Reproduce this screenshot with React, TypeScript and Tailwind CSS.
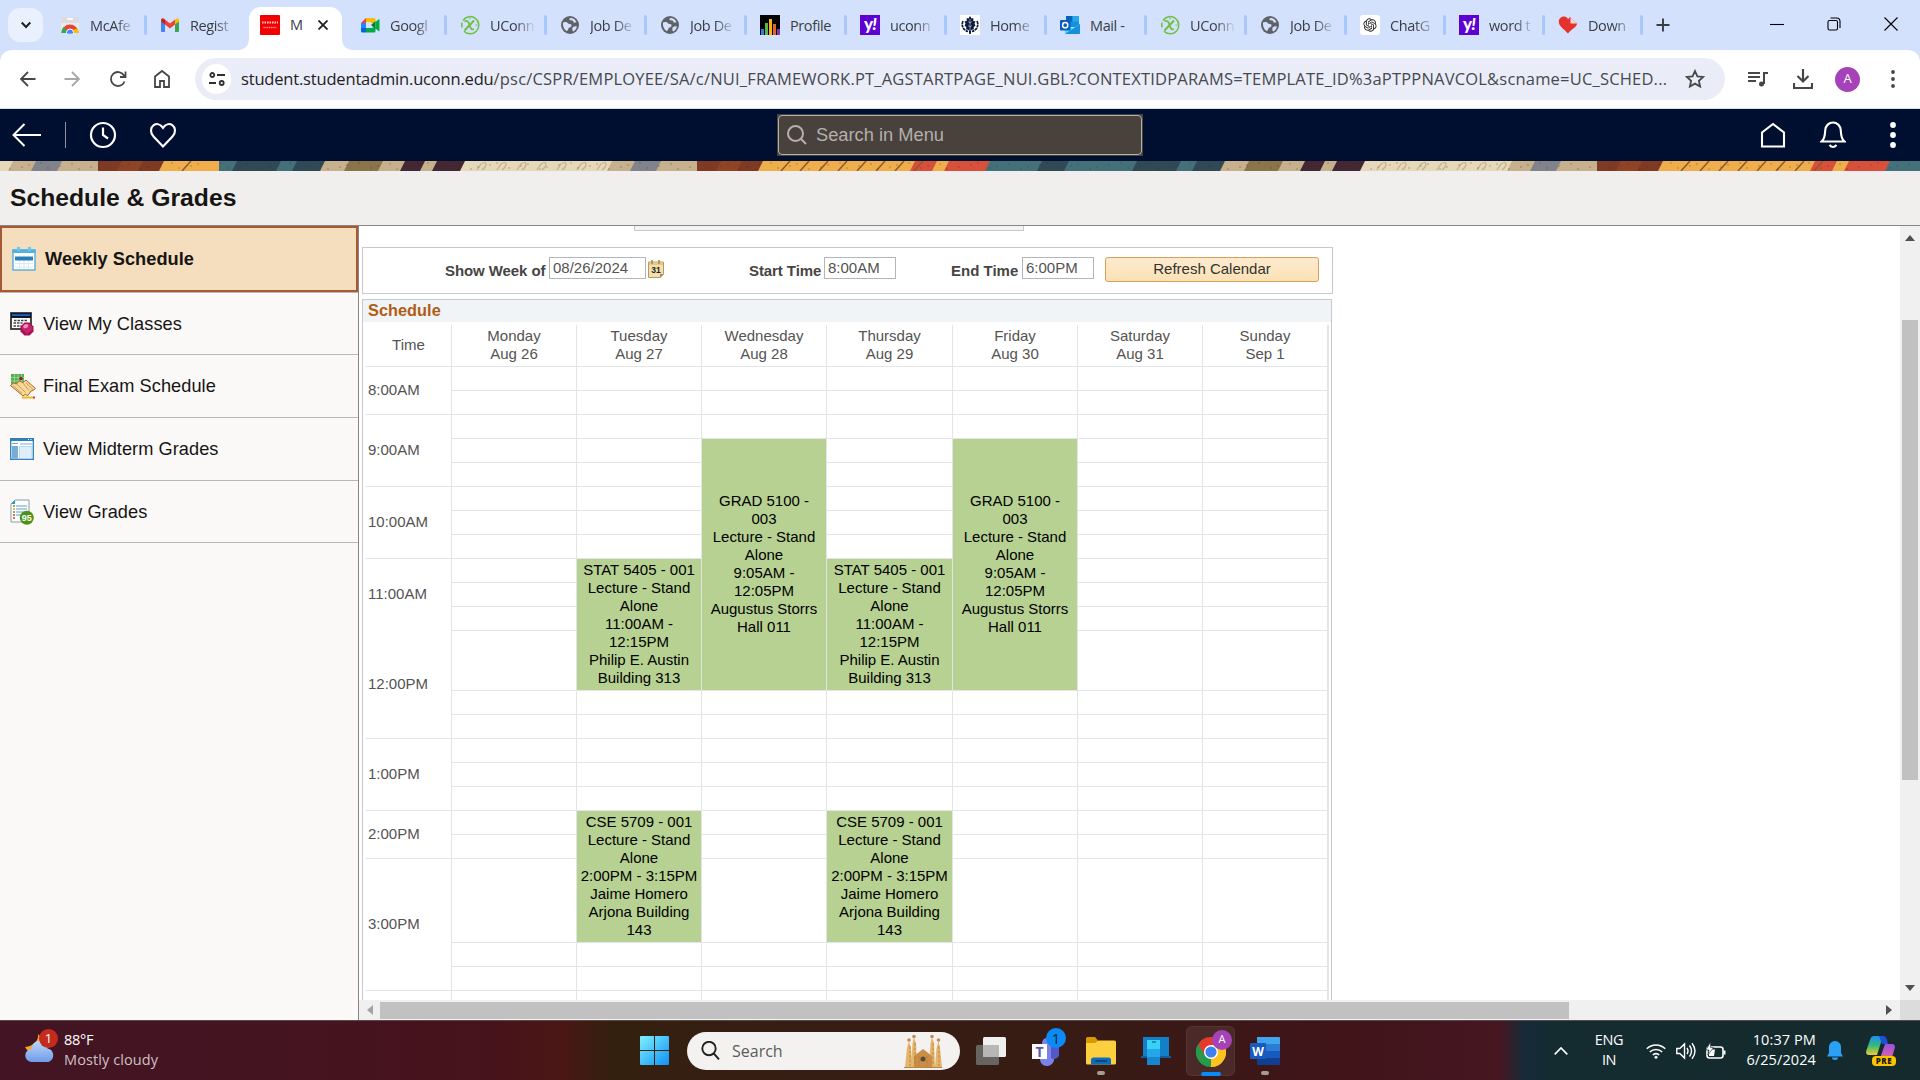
import React from 'react';
import { RiOpenaiFill } from 'react-icons/ri';

type Kids = { children?: React.ReactNode };

/* ---------- tab icons ---------- */

const StoreIcon = () => (
  <svg viewBox="0 0 20 20" className="h-5 w-5">
    <path d="M1 2h18v16H1z" fill="#e8eaed" />
    <path d="M1 2h18v6H1z" fill="#dadce0" />
    <path d="M7 4h6" stroke="#fff" strokeWidth="1.6" />
    <path d="M1.5 18a8.5 8.5 0 0 1 17 0h-5a3.5 3.5 0 0 0-7 0z" fill="#ea4335" />
    <path d="M1.5 18c0-3 1-5 2.6-6.300L7.500 17v1z" fill="#34a853" />
    <path d="M12 15l6-1.500c.4 1.200.5 3 .5 4.500h-6z" fill="#fbbc04" />
    <circle cx="10" cy="17.500" r="3.500" fill="#4285f4" stroke="#fff" />
    <path d="M0 18.600h20v1.400H0z" fill="#d3e1fd" />
  </svg>
);

const GmailIcon = () => (
  <svg viewBox="0 0 20 20" className="h-5 w-5">
    <path d="M1 5v11q0 1 1 1h3V8z" fill="#4285f4" />
    <path d="M19 5v11q0 1-1 1h-3V8z" fill="#34a853" />
    <path d="M5 4.500l5 4 5-4v5l-5 4-5-4z" fill="#ea4335" />
    <path d="M1 5.500Q1 3 3 3.200L5 4.500v5l-4-3z" fill="#c5221f" />
    <path d="M19 5.500Q19 3 17 3.200L15 4.500v5l4-3z" fill="#fbbc04" />
  </svg>
);

const OracleIcon = () => (
  <svg viewBox="0 0 20 20" className="h-5 w-5">
    <rect width="20" height="20" rx="1" fill="#f00000" />
    <path d="M2 7.500h16" stroke="#ffc4c4" strokeWidth="1.800" strokeDasharray="1.600 .9" />
    <path d="M3.500 12.500h13" stroke="#ff8f8f" strokeWidth="1.400" strokeDasharray="1.200 .6" />
  </svg>
);

const MeetIcon = () => (
  <svg viewBox="0 0 20 20" className="h-5 w-5">
    <path d="M1 8l5-5v5z" fill="#ea4335" />
    <path d="M6 3h8q1.500 0 1.500 1.500V8H11V7H6z" fill="#fbbc04" />
    <path d="M1 8h5v5H1z" fill="#2684fc" />
    <path d="M1 13h5v4.500H2.500Q1 17.500 1 16z" fill="#0066da" />
    <path d="M6 13h5l4.500-1v4q0 1.500-1.500 1.500H6z" fill="#00ac47" />
    <path d="M11 10l4.500-4v8z" fill="#00832d" />
    <path d="M15.500 7l3-2.500q1-.5 1 .5v10.500q0 1-1 .5l-3-2.500z" fill="#00ac47" />
  </svg>
);

const XIcon = () => (
  <svg viewBox="0 0 20 20" className="h-5 w-5" fill="none" stroke="#6fc043">
    <path d="M3 5.500A8.600 8.600 0 1 1 4 16.200M2.200 12.500A8.600 8.600 0 0 1 2 7.500" strokeWidth="1.500" />
    <path d="M4.500 6.500c2.500-1.500 4 0 4.800 3s2 5.800 4.700 4.500" strokeWidth="1.800" />
    <path d="M14 5.500L4.500 15.500" strokeWidth="2" />
    <path d="M10 2.500v2M15.500 10h2" strokeWidth="1" />
  </svg>
);

const GlobeIcon = () => (
  <svg viewBox="0 0 20 20" className="h-5 w-5">
    <circle cx="10" cy="10" r="9" fill="#5f6368" />
    <path d="M3 7.500c2-1 4-.5 5 .8s3.500 0 3.500 2.200-2.500 1.500-3 3-1 2.500-1.800 2.600C4.500 14.800 2.600 12 3 7.500z" fill="#d3e1fd" />
    <path d="M10.500 2.900c-1.500.6-1.500 1.800-.2 2.300s2.700-.2 3 1.200 1 1.500 2 1.200l1.200-.6C15.500 4.500 13 2.900 10.500 2.900zM13 12c1.500-.8 3-.8 3.900-.3-.6 2.500-2.200 4.200-3.900 4.800-1-1.400-1-3.500 0-4.500z" fill="#d3e1fd" />
  </svg>
);

const BarsIcon = () => (
  <svg viewBox="0 0 20 20" className="h-5 w-5">
    <rect width="20" height="20" fill="#000" />
    <rect x="1" y="14" width="3" height="6" fill="#2f7fe6" />
    <rect x="5" y="8" width="3" height="12" fill="#57b947" />
    <rect x="9" y="4" width="3" height="16" fill="#f6b21b" />
    <rect x="13" y="9" width="3" height="11" fill="#e8622c" />
    <rect x="17" y="14" width="3" height="6" fill="#7d3aa8" />
  </svg>
);

const YahooIcon = () => (
  <span className="flex h-5 w-5 items-center justify-center bg-[#5f01d1] pb-[3px] font-['Lato',sans-serif] text-[17px] leading-none font-black tracking-tighter text-white">
    y<i>!</i>
  </span>
);

const OakIcon = () => (
  <svg viewBox="0 0 20 20" className="h-5 w-5">
    <rect width="20" height="20" fill="#fff" />
    <path d="M10 1l1.500 2.500L13.300 3v3l2.200.2-1 2.600 1 1.700-1.800 1.700.2 2-2.700.8-.4 4h-1.600l-.4-4-2.700-.8.200-2-1.800-1.700 1-1.700-1-2.600L6.700 6V3l1.800.5z" fill="#0c1c3f" />
    <path d="M3 6C1 10.500 3 15 8 16.500M17 6c2 4.500 0 9-5 10.500" fill="none" stroke="#0c1c3f" strokeWidth="1.700" strokeDasharray="3 .6" />
    <path d="M10 4v12M10 8L8 6.500M10 8l2-1.500M10 12l-2-1.500M10 12l2-1.500" stroke="#fff" strokeWidth=".5" />
  </svg>
);

const OutlookIcon = () => (
  <svg viewBox="0 0 20 20" className="h-5 w-5">
    <path d="M6 1h13v11H6z" fill="#1490df" />
    <path d="M6 1h6.500v5.500H6z" fill="#0364b8" />
    <path d="M12.500 1H19v5.500h-6.500z" fill="#28a8ea" />
    <path d="M5 9l7.500 4.500L20 9v9q0 1-1 1H6q-1 0-1-1z" fill="#50d9ff" />
    <path d="M5 19L20 9v9q0 1-1 1z" fill="#1490df" />
    <rect y="5" width="10.500" height="10.500" rx="1" fill="#0a5fbd" />
    <circle cx="5.200" cy="10.200" r="2.600" fill="none" stroke="#fff" strokeWidth="1.500" />
  </svg>
);

const GptMark = () => (
  <span className="flex h-5 w-5 items-center justify-center rounded-[3px] bg-white text-[16px] text-[#222]">
    <RiOpenaiFill />
  </span>
);

const HeartIcon = () => (
  <svg viewBox="0 0 20 20" className="h-5 w-5">
    <path d="M10 18.500C6 14 .5 11 .8 6.500 1 3 3.500 1.500 6 1.500q3 0 4 2.800L12 2l7 6.500c0 3.500-5 5-9 10z" fill="#e5322d" />
    <path d="M12.500 2.500L19 8.500h-6.500z" fill="#f9d7d6" />
  </svg>
);

const TABS: { label: string; icon: React.ReactNode; active?: boolean; line?: boolean; w?: string }[] = [
  { label: 'McAfe', icon: <StoreIcon />, line: true },
  { label: 'Regist', icon: <GmailIcon /> },
  { label: 'M', icon: <OracleIcon />, active: true },
  { label: 'Googl', icon: <MeetIcon />, line: true },
  { label: 'UConn', icon: <XIcon />, line: true },
  { label: 'Job De', icon: <GlobeIcon />, line: true },
  { label: 'Job De', icon: <GlobeIcon />, line: true },
  { label: 'Profile', icon: <BarsIcon />, line: true },
  { label: 'uconn', icon: <YahooIcon />, line: true },
  { label: 'Home', icon: <OakIcon />, line: true },
  { label: 'Mail -', icon: <OutlookIcon />, line: true },
  { label: 'UConn', icon: <XIcon />, line: true },
  { label: 'Job De', icon: <GlobeIcon />, line: true },
  { label: 'ChatG', icon: <GptMark />, line: true, w: 'w-[99px]' },
  { label: 'word t', icon: <YahooIcon />, line: true, w: 'w-[99px]' },
  { label: 'Down', icon: <HeartIcon />, line: true, w: 'w-[98px]' },
];

function TabStrip() {
  return (
    <div className="flex h-[50px] w-full bg-[#d3e1fd]">
      <div className="mt-2 ml-2 flex h-[34px] w-[35px] items-center justify-center rounded-xl bg-[#e9f1fe]">
        <svg viewBox="0 0 10 8" className="h-2 w-2.5" fill="none" stroke="#1f1f1f" strokeWidth="2">
          <path d="M.7 1.500L5 6l4.300-4.500" />
        </svg>
      </div>
      <div className="ml-[4px] flex">
        {TABS.map((t, i) =>
          t.active ? (
            <div key={i} className="relative flex h-[50px] w-[100px] items-center">
              <div className="absolute top-[7px] left-[2px] h-[43px] w-[93px] rounded-t-xl bg-white" />
              <svg viewBox="0 0 12 12" className="absolute bottom-0 -left-[10px] h-3 w-3" fill="#fff"><path d="M0 12Q12 12 12 0V12z" /></svg>
              <svg viewBox="0 0 12 12" className="absolute right-[-7px] bottom-0 h-3 w-3" fill="#fff"><path d="M12 12Q0 12 0 0V12z" /></svg>
              <span className="relative ml-[13px]">{t.icon}</span>
              <span className="relative ml-[10px] w-[14px] text-[14.500px] text-[#3a3d42]">{t.label}</span>
              <svg viewBox="0 0 10 10" className="relative ml-[14px] h-2.5 w-2.5" stroke="#1f1f1f" strokeWidth="1.800"><path d="M.5.5l9 9M9.500.5l-9 9" /></svg>
            </div>
          ) : (
            <div key={i} className={`flex h-[50px] items-center ${t.w ?? 'w-[100px]'}`}>
              <span className="ml-[13px]">{t.icon}</span>
              <span className={`ml-[10px] w-[46px] pt-px text-[14.500px] tracking-[-0.4px] whitespace-nowrap text-[#3a3d42] ${t.label === 'Profile' || t.label === 'Mail -' ? '' : '[mask-image:linear-gradient(90deg,#000_55%,rgb(0_0_0/0.15)_92%)]'}`}>{t.label}</span>
              {t.line && <span className="ml-auto h-5 w-[3px] rounded bg-[#a8c7fa]" />}
            </div>
          ),
        )}
      </div>
      <svg viewBox="0 0 14 14" className="mt-[18px] ml-[13px] h-3.5 w-3.5" stroke="#3a3d42" strokeWidth="1.900"><path d="M7 .5v13M.5 7h13" /></svg>
      <div className="ml-auto flex items-start gap-[43px] pt-[17px] pr-[22px]">
        <svg viewBox="0 0 14 14" className="h-3.5 w-3.5" stroke="#000" strokeWidth="1.100"><path d="M0 7.500h14" /></svg>
        <svg viewBox="0 0 14 14" className="h-3.5 w-3.5" fill="none" stroke="#000" strokeWidth="1.100">
          <rect x="1" y="3.500" width="9.500" height="9.500" rx="1.500" />
          <path d="M3.500 1h6q3.500 0 3.500 3.500V11" />
        </svg>
        <svg viewBox="0 0 14 14" className="h-3.5 w-3.5" stroke="#000" strokeWidth="1.100"><path d="M.5.5l13 13M13.500.5l-13 13" /></svg>
      </div>
    </div>
  );
}

function Toolbar() {
  return (
    <div className="h-[59px] bg-[#d3e1fd]">
      <div className="flex h-[59px] items-center rounded-t-xl border-b border-[#d5dfe0] bg-white">
        <svg viewBox="0 0 16 16" className="ml-5 h-4 w-4" fill="none" stroke="#474747" strokeWidth="1.800"><path d="M15.500 8H1.500M8 1L1 8l7 7" /></svg>
        <svg viewBox="0 0 16 16" className="ml-[28px] h-4 w-4" fill="none" stroke="#a6a6a6" strokeWidth="1.800"><path d="M.5 8h14M8 1l7 7-7 7" /></svg>
        <svg viewBox="0 0 18 18" className="ml-[29px] h-[18px] w-[18px]" fill="none" stroke="#474747" strokeWidth="1.800">
          <path d="M15.500 11.500A7 7 0 1 1 15 5.500L16.500 7M16.500 1.500V7H11" />
        </svg>
        <svg viewBox="0 0 18 20" className="ml-[26px] h-5 w-[18px]" fill="none" stroke="#474747" strokeWidth="1.800">
          <path d="M2 18V7.500L9 2l7 5.500V18h-5v-6H7v6z" />
        </svg>
        <div className="ml-6 flex h-[42px] w-[1530px] items-center rounded-full bg-[#eaedf8]">
          <span className="ml-[7px] flex h-[30px] w-[29px] items-center justify-center rounded-full bg-white">
            <svg viewBox="0 0 16 14" className="h-3.5 w-4" fill="none" stroke="#303030" strokeWidth="1.800">
              <circle cx="3.300" cy="3" r="2" /><path d="M8 3h8M0 11h7" /><circle cx="12.700" cy="11" r="2" />
            </svg>
          </span>
          <div className="ml-[10px] w-[1430px] pt-px text-[16.500px] tracking-[0.190px] whitespace-nowrap text-[#46494e]">
            <span className="tracking-[-0.180px] text-[#1f2023]">student.studentadmin.uconn.edu</span>
            /psc/CSPR/EMPLOYEE/SA/c/NUI_FRAMEWORK.PT_AGSTARTPAGE_NUI.GBL?CONTEXTIDPARAMS=TEMPLATE_ID%3aPTPPNAVCOL&amp;scname=UC_SCHED...
          </div>
          <svg viewBox="0 0 20 20" className="ml-auto mr-5 h-5 w-5" fill="none" stroke="#474747" strokeWidth="1.800">
            <path d="M10 2l2.400 5.300 5.800.6-4.300 3.900 1.200 5.700L10 14.600l-5.100 2.900 1.200-5.700L1.800 7.900l5.800-.6z" />
          </svg>
        </div>
        <svg viewBox="0 0 20 18" className="ml-[23px] h-[18px] w-5" fill="none" stroke="#474747" strokeWidth="2">
          <path d="M0 3h12M0 7h12M0 11h8M16 14V3h4" /><circle cx="13.500" cy="14" r="2.500" fill="#474747" stroke="none" />
        </svg>
        <svg viewBox="0 0 20 20" className="ml-[25px] h-5 w-5" fill="none" stroke="#474747" strokeWidth="2.200">
          <path d="M10 0v12M4.500 7l5.500 5.500L15.500 7M1 14v5h18v-5" />
        </svg>
        <span className="ml-[22px] flex h-[25px] w-[25px] items-center justify-center rounded-full bg-[#a642b8] text-[13px] text-white">A</span>
        <svg viewBox="0 0 4 18" className="ml-[31px] h-[18px] w-1" fill="#474747"><circle cx="2" cy="2" r="1.900" /><circle cx="2" cy="9" r="1.900" /><circle cx="2" cy="16" r="1.900" /></svg>
      </div>
    </div>
  );
}

function NavBar() {
  return (
    <div className="grid h-[52px] grid-cols-[777px_366px_1fr] items-center bg-[#000e2f] font-['Liberation_Sans',Arial,sans-serif]">
      <div className="flex items-center">
        <svg viewBox="0 0 30 24" className="ml-3 h-6 w-[30px]" fill="none" stroke="#fff" strokeWidth="2"><path d="M29 12H1.500M12.500 1L1.500 12l11 11" /></svg>
        <span className="ml-[23px] h-[26px] w-px bg-[#8d929f]" />
        <svg viewBox="0 0 28 28" className="ml-[23px] h-7 w-7" fill="none" stroke="#fff" strokeWidth="2.200"><circle cx="14" cy="14" r="12" /><path d="M14 6.500V14l5 3.500" /></svg>
        <svg viewBox="0 0 28 28" className="ml-[32px] h-7 w-7" fill="none" stroke="#fff" strokeWidth="2.100">
          <path d="M14 25.500L4.500 15.500C.8 11.500 1.500 6.500 4.700 4.200c3-2 6.800-1 9.300 2.600 2.500-3.600 6.300-4.600 9.300-2.600 3.200 2.300 3.900 7.300.2 11.300z" />
        </svg>
      </div>
      <div className="h-[42px] bg-[#48413c] p-px">
        <div className="flex h-10 items-center rounded border border-[#b3b0ad] pl-2">
          <svg viewBox="0 0 20 20" className="h-5 w-5" fill="none" stroke="#b3b0ad" strokeWidth="2"><circle cx="8.500" cy="8.500" r="7.500" /><path d="M13.800 13.800L19 19" /></svg>
          <span className="ml-[9px] text-[18.300px] text-[#b3b0ad]">Search in Menu</span>
        </div>
      </div>
      <div className="flex items-center justify-end">
        <svg viewBox="0 0 26 26" className="h-[26px] w-[26px]" fill="none" stroke="#fff" strokeWidth="2.100"><path d="M2 24.500V10.500L13 2l11 8.500v14z" /></svg>
        <svg viewBox="0 0 26 28" className="ml-[34px] h-7 w-[26px]" fill="none" stroke="#fff" strokeWidth="2.100">
          <path d="M1.500 20.500C5 18 5 14 5.200 9.500 5.500 4.500 9 1.500 13 1.500s7.500 3 7.800 8c.2 4.500.2 8.500 3.700 11zM9.500 24q3.500 4 7 0" />
        </svg>
        <svg viewBox="0 0 6 26" className="mr-6 ml-[44px] h-[26px] w-1.5" fill="#fff"><circle cx="3" cy="3" r="2.900" /><circle cx="3" cy="13" r="2.900" /><circle cx="3" cy="23" r="2.900" /></svg>
      </div>
    </div>
  );
}

/* Woven artwork strip: slanted colour bands, repeated every 900px. */
const BANDS: [number, string][] = [
  [0, '#7e3a22'], [24, '#8f4426'], [45, '#7e3a22'], [66, '#efae4b'], [218, '#d9503a'], [240, '#efae4b'], [252, '#d9503a'], [293, '#44707a'], [345, '#2f4a55'],
  [372, '#44707a'], [440, '#2f4a55'], [484, '#44707a'], [500, '#2f4a55'], [528, '#c7b08c'], [552, '#8a7449'], [586, '#c7b08c'], [608, '#432733'],
  [628, '#c7b08c'], [640, '#432733'], [668, '#e6d9bb'], [815, '#c7b08c'], [838, '#82828a'], [864, '#c7b08c'], [900, '#7e3a22'],
];

const Bands = ({ at, from, to }: { at: number; from: number; to: number }) => (
  <g>
    {BANDS.slice(0, -1).map(([x, c], i) => {
      const a = Math.max(at + x, from);
      const b = Math.min(at + BANDS[i + 1][0], to);
      return b > a ? <path key={i} d={`M${a} 0L${b + 6} 0L${b + 12} 10L${a - (a === from ? 0 : 5)} 10z`} fill={c} /> : null;
    })}
    {Array.from({ length: 8 }, (_, i) => {
      const x = at + 84 + i * 19;
      return x > from && x < to - 14 ? <path key={i} d={`M${x} 10l9-10`} stroke="#8c5a2b" strokeWidth="1.500" /> : null;
    })}
    {Array.from({ length: 7 }, (_, i) => {
      const x = at + 680 + i * 20;
      return x > from && x < to ? <path key={i} d={`M${x} 9l4-6q5-3 5 0t-4 6`} stroke="#c4ae86" strokeWidth="1.200" fill="none" /> : null;
    })}
    {Array.from({ length: 90 }, (_, i) => {
      const x = at + i * 10 + ((i * 7) % 5);
      return x > from && x < to ? <circle key={i} cx={x} cy={2 + ((i * 5) % 7)} r=".7" fill="#3b2a22" opacity=".45" /> : null;
    })}
  </g>
);

const Banner = () => (
  <svg viewBox="0 0 1920 10" className="block h-2.5 w-full">
    <rect width="1920" height="10" fill="#e6d9bb" />
    <Bands at={-802} from={0} to={98} />
    <Bands at={98} from={98} to={207} />
    <path d="M207 0h12v10h-12z" fill="#efae4b" />
    <path d="M219 0h60v10h-60z" fill="#2f4a55" />
    <Bands at={-203} from={219} to={697} />
    <Bands at={697} from={697} to={1597} />
    <Bands at={1597} from={1597} to={1920} />
  </svg>
);

/* ---------- side menu ---------- */

const WeekIcon = () => (
  <svg viewBox="0 0 24 24" className="h-6 w-6">
    <rect x="1" y="3" width="22" height="20" fill="#fff" stroke="#4aa6dd" strokeWidth="1.300" />
    <path d="M.5 2.500h23v3.500H.5z" fill="#4db3e6" />
    <path d="M5 0h3v4H5zM16 0h3v4h-3z" fill="#6cc3ee" />
    <path d="M3 16.500h18M3 20h18M7.500 8v14M12 8v14M16.500 8v14" stroke="#dcebf4" />
    <path d="M3 9.500h18v4H3z" fill="#2b7fb8" />
  </svg>
);
const ClassesIcon = () => (
  <svg viewBox="0 0 24 24" className="h-6 w-6">
    <rect x="1" y="1" width="20" height="16" fill="#fff" stroke="#333" strokeWidth="1.800" />
    <path d="M1 1h20v5H1z" fill="#111827" /><path d="M2 2.200h18v1.800H2z" fill="#1c62c4" />
    <path d="M4 8.500h14M3.500 11h9M3.500 14h8" stroke="#444" strokeWidth="1.300" strokeDasharray="2.500 1" />
    <path d="M14.500 10.500h5l4 4v5l-4 4h-5l-4-4v-5z" fill="#a80f4e" /><path d="M14.800 12h4.400l3 3v3l-5.200 4-5-5v-2z" fill="#c3266a" /><path d="M13 14l2.500-2 3 .5-1 3-3.500 1z" fill="#ee93ba" />
  </svg>
);
const ExamIcon = () => (
  <svg viewBox="0 0 26 26" className="h-[26px] w-[26px]">
    <rect x="1" y="1" width="13" height="13" fill="#52b04e" />
    <path d="M1 4.500h13M1 8h13M4.500 1v13M8 1v13M11.500 1v13" stroke="#a5d8a0" strokeWidth=".8" />
    <circle cx="11" cy="5.500" r="1.700" fill="#9c1c1c" />
    <path d="M.5 12.500l3-2.500 3 1 2.500-3 4 1.500 3-2.500 9.500 8.500-2.500 2-2 .5-3 4.500-3-1-2 1.500z" fill="#f6d898" stroke="#a8672a" />
    <path d="M12.500 9.500l6.500 8M3 12.500l9 8M6.500 11l9 8.500M16 10l7 6.500" stroke="#c08a48" strokeWidth=".8" />
    <path d="M12 24.500h11" stroke="#e9b91d" strokeWidth="2" /><path d="M23 24.500h2" stroke="#d33" strokeWidth="2" />
  </svg>
);
const MidtermIcon = () => (
  <svg viewBox="0 0 24 22" className="h-[22px] w-6">
    <rect x=".7" y=".7" width="22.600" height="20.600" fill="#fff" stroke="#3585be" strokeWidth="1.400" />
    <path d="M0 0h24v3H0z" fill="#2f7fb9" /><path d="M18 1.500h1M20.500 1.500h1" stroke="#fff" />
    <path d="M2 8h6v12.500H2z" fill="#76aed3" /><path d="M9.500 8.500H22v12H9.500z" fill="#dfeef8" stroke="#a8cde6" strokeWidth=".8" />
    <path d="M2 5.500h6M10 6h12" stroke="#76aed3" />
  </svg>
);
const GradesIcon = () => (
  <svg viewBox="0 0 24 26" className="h-[26px] w-6">
    <path d="M5 1h14v22H1V5z" fill="#fff" stroke="#8a9aa5" /><path d="M1 5l4-4v4z" fill="#3c97cf" />
    <path d="M6 7h11M6 10h11M6 13h8M6 16h6" stroke="#5d9fc8" strokeWidth="1.200" />
    <path d="M3 7h2M3 13h2" stroke="#4fa32d" strokeWidth="1.700" /><path d="M3 10h2" stroke="#e0a020" strokeWidth="1.700" /><path d="M3 16h2M3 19h2" stroke="#cc4422" strokeWidth="1.700" />
    <circle cx="16.800" cy="18.700" r="7" fill="#4b9312" />
    <text x="16.800" y="22" textAnchor="middle" fontSize="9" fontWeight="700" fill="#fff" fontFamily="Liberation Sans">95</text>
  </svg>
);

const MENU = [
  { label: 'View My Classes', icon: <ClassesIcon />, h: 'h-[62px]' },
  { label: 'Final Exam Schedule', icon: <ExamIcon />, h: 'h-[63px]' },
  { label: 'View Midterm Grades', icon: <MidtermIcon />, h: 'h-[63px]' },
  { label: 'View Grades', icon: <GradesIcon />, h: 'h-[62px]' },
];

function SideMenu() {
  return (
    <nav className="h-full w-[359px] border-r border-[#8b8580] bg-[#fbf9f8] text-[18.200px] text-[#161513]">
      <div className="flex h-[66px] items-center border-2 border-[#a35a35] bg-[#f5debe] pl-[10px] font-bold">
        <WeekIcon />
        <span className="ml-[9px] pt-0.5 tracking-[0.050px]">Weekly Schedule</span>
      </div>
      <div className="border-t border-[#bcb6b1]">
        {MENU.map((m) => (
          <div key={m.label} className={`flex items-center border-b border-[#bcb6b1] pl-[9px] ${m.h}`}>
            <span className="w-[34px] pl-px">{m.icon}</span>
            <span className="pt-0.5 tracking-[0.050px]">{m.label}</span>
          </div>
        ))}
      </div>
    </nav>
  );
}

/* ---------- calendar ---------- */

type Slot = { h: string; lines?: string[]; count?: number };
const e = (count: number): Slot => ({ h: 'h-6', count });

const GRAD = ['GRAD 5100 -', '003', 'Lecture - Stand', 'Alone', '9:05AM -', '12:05PM', 'Augustus Storrs', 'Hall 011'];
const STAT = ['STAT 5405 - 001', 'Lecture - Stand', 'Alone', '11:00AM -', '12:15PM', 'Philip E. Austin', 'Building 313'];
const CSE = ['CSE 5709 - 001', 'Lecture - Stand', 'Alone', '2:00PM - 3:15PM', 'Jaime Homero', 'Arjona Building', '143'];

const tall: Slot = { h: 'h-[60px]' };
const taller: Slot = { h: 'h-[84px]' };
const plain: Slot[] = [e(11), tall, e(7), taller, e(2)];
const grad: Slot[] = [e(3), { h: 'h-[252px]', lines: GRAD }, e(7), taller, e(2)];
const both: Slot[] = [e(8), { h: 'h-[132px]', lines: STAT }, e(5), { h: 'h-[132px]', lines: CSE }, e(2)];

const DAYS = [
  { day: 'Monday', date: 'Aug 26', w: 'w-[125px]', slots: plain },
  { day: 'Tuesday', date: 'Aug 27', w: 'w-[125px]', slots: both },
  { day: 'Wednesday', date: 'Aug 28', w: 'w-[125px]', slots: grad },
  { day: 'Thursday', date: 'Aug 29', w: 'w-[126px]', slots: both },
  { day: 'Friday', date: 'Aug 30', w: 'w-[125px]', slots: grad },
  { day: 'Saturday', date: 'Aug 31', w: 'w-[125px]', slots: plain },
  { day: 'Sunday', date: 'Sep 1', w: 'w-[125px]', slots: plain },
];

const HOURS = [
  { t: '8:00AM', c: 'h-12 border-[#e3e4e5]' },
  { t: '9:00AM', c: 'h-[72px] border-[#e3e4e5]' },
  { t: '10:00AM', c: 'h-[72px] border-[#e3e4e5]' },
  { t: '11:00AM', c: 'h-[72px] border-transparent' },
  { t: '12:00PM', c: 'h-[108px] border-[#e3e4e5]' },
  { t: '1:00PM', c: 'h-[72px] border-[#e3e4e5]' },
  { t: '2:00PM', c: 'h-12 border-[#e3e4e5]' },
  { t: '3:00PM', c: 'h-[132px] border-[#e3e4e5]' },
];

function Calendar() {
  return (
    <section className="mt-1 ml-[3px] h-[701px] w-[970px] overflow-hidden border border-b-0 border-[#c7c9ce]">
      <h2 className="h-[22px] bg-[#f0f4f6] pl-[5px] text-[16.300px] leading-[20px] font-bold tracking-[0.050px] text-[#b15c14]">Schedule</h2>
      <div className="mt-[3px] ml-[3px] flex w-[963px] border-r-2 border-[#e3e4e5] text-[#545352]">
        <div className="w-[85px]">
          <div className="flex h-[42px] items-center justify-center border-b border-[#e3e4e5] pb-0.5">Time</div>
          {HOURS.map((h) => (
            <div key={h.t} className={`flex items-center border-b pb-0.5 pl-0.5 ${h.c}`}>{h.t}</div>
          ))}
        </div>
        {DAYS.map((d) => (
          <div key={d.day} className={`border-l border-[#e3e4e5] ${d.w}`}>
            <div className="flex h-[42px] flex-col items-center justify-center border-b border-[#e3e4e5] pb-0.5 leading-[18px]">
              <span>{d.day}</span>
              <span>{d.date}</span>
            </div>
            {d.slots.flatMap((s, i) =>
              s.lines
                ? [
                    <div key={i} className={`flex flex-col items-center justify-center border-b border-[#e3e4e5] bg-[#b7d192] pb-0.5 leading-[18px] whitespace-nowrap text-black ${s.h}`}>
                      {s.lines.map((l) => <span key={l}>{l}</span>)}
                    </div>,
                  ]
                : Array.from({ length: s.count ?? 1 }, (_, k) => <div key={`${i}-${k}`} className={`border-b border-[#e3e4e5] ${s.h}`} />),
            )}
            <div className="h-6" />
          </div>
        ))}
      </div>
    </section>
  );
}

const Field = ({ children, className }: Kids & { className: string }) => (
  <span className={`flex h-[22px] items-center border border-[#b3b5b8] bg-white pl-[3px] text-[#545352] ${className}`}>{children}</span>
);

function Filters() {
  return (
    <div className="mt-[16px] ml-[3px] flex h-[47px] w-[971px] items-start border border-[#c7c9ce] pt-[9px]">
      <b className="mt-[5px] ml-[82px] w-[104px] tracking-[-0.080px] whitespace-nowrap text-[#464544]">Show Week of</b>
      <Field className="w-[97px]">08/26/2024</Field>
      <svg viewBox="0 0 16 18" className="mt-[3px] ml-[2px] h-[18px] w-4">
        <path d="M.5 2h15v12l-3 3.500H.5z" fill="#f3dfae" stroke="#b49a62" />
        <path d="M1 2h14v3H1z" fill="#e5c782" /><path d="M4 0v4M11 0v4" stroke="#9a8658" strokeWidth="1.500" />
        <path d="M12 17.500V14h3.500z" fill="#a98c4c" />
        <text x="8" y="13" textAnchor="middle" fontSize="8.500" fontWeight="700" fill="#222" fontFamily="Liberation Sans">31</text>
      </svg>
      <b className="mt-[5px] ml-[85px] w-[75px] tracking-[-0.080px] whitespace-nowrap text-[#464544]">Start Time</b>
      <Field className="w-[72px]">8:00AM</Field>
      <b className="mt-[5px] ml-[55px] w-[71px] whitespace-nowrap text-[#464544]">End Time</b>
      <Field className="w-[72px]">6:00PM</Field>
      <button className="ml-[11px] h-[25px] w-[214px] rounded-[3px] border border-[#d9a05c] bg-linear-to-b from-[#fdebcf] to-[#fbe1b4] pb-0.5 leading-none text-[#333]">Refresh Calendar</button>
    </div>
  );
}

function Content() {
  return (
    <main className="flex h-[794px] w-[1561px] flex-col bg-white">
      <div className="flex h-[774px]">
        <div className="flex h-full w-[1541px] flex-col overflow-hidden text-[15px] leading-[18px]">
          <div className="ml-[275px] h-[5px] w-[390px] shrink-0 border border-t-0 border-[#c7c9ce] bg-[#f0f4f6]" />
          <div className="shrink-0"><Filters /></div>
          <div className="mt-px shrink-0"><Calendar /></div>
        </div>
        <div className="flex w-5 flex-col items-center justify-between bg-[#f0f0f0]">
          <svg viewBox="0 0 10 6" className="mt-[9px] h-1.5 w-2.5" fill="#505050"><path d="M0 6l5-6 5 6z" /></svg>
          <div className="mt-[79px] mb-auto h-[460px] w-4 bg-[#c1c1c1]" />
          <svg viewBox="0 0 10 6" className="mb-[9px] h-1.5 w-2.5" fill="#505050"><path d="M0 0l5 6 5-6z" /></svg>
        </div>
      </div>
      <div className="flex h-5 items-center bg-[#f0f0f0]">
        <svg viewBox="0 0 6 10" className="ml-2 h-2.5 w-1.5" fill="#a3a3a3"><path d="M6 0L0 5l6 5z" /></svg>
        <div className="ml-[7px] h-[17px] w-[1189px] bg-[#c1c1c1]" />
        <svg viewBox="0 0 6 10" className="mr-2 ml-auto h-2.5 w-1.5" fill="#505050"><path d="M0 0l6 5-6 5z" /></svg>
        <div className="h-5 w-5 bg-[#dcdcdc]" />
      </div>
    </main>
  );
}

/* ---------- taskbar ---------- */

const Weather = () => (
  <div className="relative h-[32px] w-[36px]">
    <svg viewBox="0 0 36 32" className="h-8 w-9">
      <defs><linearGradient id="cloud" x1="0" y1="0" x2="0" y2="1"><stop offset="0" stopColor="#bcd7fb" /><stop offset="1" stopColor="#6f9be8" /></linearGradient></defs>
      <path d="M13 3c1 6-4 12-13 13 3 6 9 7 14 4s6-11-1-17z" fill="#f5a623" />
      <path d="M7 31a6.500 6.500 0 0 1-.5-13A8 8 0 0 1 22.500 17.500a7 7 0 0 1 1 13.500z" fill="url(#cloud)" />
    </svg>
    <span className="absolute -top-[2px] left-[14px] flex h-[19px] w-[19px] items-center justify-center rounded-full bg-[#c42b1c] text-[13px] leading-none text-white">1</span>
  </div>
);

const Cathedral = () => (
  <svg viewBox="0 0 38 34" className="h-[34px] w-[38px]">
    <g fill="#e6b56c">
      <path d="M1 33L3 14 5 7l2 7 1 19zM7 33L8.500 9 10 3l2 6 1 24zM25 33L26.500 9 28 3l2 6 1 24zM31 33l1.500-19 2-7 1.500 7 2 19z" />
      <path d="M10 33V22l9-7 9 7v11z" fill="#c98d45" />
      <circle cx="5" cy="6" r="1.800" fill="#c98a50" /><circle cx="10" cy="2.500" r="1.800" fill="#c98a50" /><circle cx="28" cy="2.500" r="1.800" fill="#c98a50" /><circle cx="34.500" cy="6" r="1.800" fill="#c98a50" />
    </g>
    <circle cx="19" cy="25" r="2.500" fill="#5a4a3c" />
    <path d="M6 12v20M11 9v23M29 9v23M35 12v20M15 22v10M23 22v10" stroke="#b07b40" strokeWidth=".8" strokeDasharray="3 1.500" />
    <path d="M0 33.500h38" stroke="#b98245" />
  </svg>
);

const Chrome = () => (
  <svg viewBox="0 0 30 30" className="h-[30px] w-[30px]">
    <path d="M15 15L2 7.500A15 15 0 0 1 28 7.500z" fill="#e33b2e" />
    <path d="M15 15L28 7.500A15 15 0 0 1 15 30z" fill="#fcc31e" />
    <path d="M15 15v15A15 15 0 0 1 2 7.500z" fill="#269a4a" />
    <path d="M15 8h13.300L22 19z" fill="#fcc31e" /><path d="M2 7.500L9 19l6-4V8z" fill="#e33b2e" /><path d="M2 7.500L9 19l6 3-3 7.700A15 15 0 0 1 2 7.500z" fill="#269a4a" /><path d="M21 18.500L14.500 30A15 15 0 0 0 28 7.500h-9z" fill="#fcc31e" />
    <circle cx="15" cy="15" r="7" fill="#fff" /><circle cx="15" cy="15" r="5.600" fill="#3b82f0" />
  </svg>
);

const TaskIcon = ({ children, dot }: Kids & { dot?: string }) => (
  <div className="flex h-[49px] w-[30px] flex-col items-center">
    <div className="mt-[9px] flex h-[32px] w-full items-center justify-center">{children}</div>
    {dot && <span className={`mt-[4px] h-1 rounded-full ${dot}`} />}
  </div>
);

function Taskbar() {
  return (
    <footer className="flex h-[60px] items-center border-t border-[#5a4a4c] bg-[linear-gradient(90deg,#431423_0,#441421_250px,#47131c_480px,#4b1615_560px,#34200f_610px,#371e14_800px,#371b14_1100px,#401419_1330px,#461621_1500px,#162b38_1524px,#142b2f_1560px,#142a2d_100%)] text-white">
      <div className="flex w-[640px] pl-[25px]">
        <Weather />
        <div className="-mt-px ml-[3px] text-[14.500px] leading-5">
          <div className="tracking-[-0.3px]">88°F</div>
          <div className="tracking-[0.100px] text-[#cfc0c5]">Mostly cloudy</div>
        </div>
      </div>
      <svg viewBox="0 0 29 29" className="h-[29px] w-[29px]">
        <defs><linearGradient id="win" x1="0" y1="0" x2="1" y2="1"><stop offset="0" stopColor="#7ef0ff" /><stop offset="1" stopColor="#0f92f5" /></linearGradient></defs>
        <path d="M0 1q0-1 1-1h13v14H0zM15 0h13q1 0 1 1v13H15zM0 15h14v14H1q-1 0-1-1zM15 15h14v13q0 1-1 1H15z" fill="url(#win)" />
      </svg>
      <div className="ml-[18px] flex h-[38px] w-[273px] items-center rounded-full bg-[#f4f2f1] pr-[18px] pl-[14px]">
        <svg viewBox="0 0 19 19" className="h-[19px] w-[19px]" fill="none" stroke="#222" strokeWidth="1.900"><circle cx="8" cy="7.500" r="6.700" /><path d="M12.800 12.500L18 18.300" /></svg>
        <span className="ml-3 text-[16px] text-[#5b5b5b]">Search</span>
        <span className="ml-auto"><Cathedral /></span>
      </div>
      <div className="ml-4 flex items-center">
        <TaskIcon>
          <svg viewBox="0 0 30 28" className="h-7 w-[30px]"><rect y="8" width="23" height="20" rx="1.500" fill="#666360" /><rect x="7" width="23" height="20" rx="1.500" fill="#f0f0f0" /><path d="M7 8h16v12H7z" fill="#b9b7b5" /></svg>
        </TaskIcon>
        <div className="ml-[28px]">
          <TaskIcon>
            <div className="relative">
              <svg viewBox="0 0 34 32" className="h-8 w-[34px]">
                <circle cx="15" cy="8" r="5" fill="#7b83eb" /><path d="M8 11h14v12a7 7 0 0 1-14 2z" fill="#7b83eb" /><path d="M19 12h8v8a5 5 0 0 1-8 3z" fill="#5059c9" />
                <rect y="9" width="15" height="15" fill="#fff" />
                <text x="7.500" y="21.500" textAnchor="middle" fontSize="14" fontWeight="700" fill="#5558af" fontFamily="Open Sans">T</text>
              </svg>
              <span className="absolute -top-[7px] left-[14px] flex h-5 w-5 items-center justify-center rounded-full bg-[#0a8bf5] text-[14px] text-[#101c2c]">1</span>
            </div>
          </TaskIcon>
        </div>
        <div className="ml-[22px]">
          <TaskIcon dot="w-2 bg-[#a79b98]">
            <svg viewBox="0 0 30 28" className="h-7 w-[30px]"><path d="M0 1.500Q0 0 1.500 0H9l3 3.500V9H0z" fill="#d99a00" /><path d="M0 6h9l3.500-2.500h16Q30 3.500 30 5v21q0 1.500-1.500 1.500h-27Q0 27.500 0 26z" fill="#fccf3f" /><path d="M5 27.500V23q0-2.500 2.500-2.500h15Q25 20.500 25 23v4.500z" fill="#0e6cbd" /><path d="M9 24h12" stroke="#083d70" strokeWidth="1.500" /></svg>
          </TaskIcon>
        </div>
        <div className="ml-[25px]">
          <TaskIcon>
            <svg viewBox="0 0 30 28" className="h-7 w-[30px]"><path d="M2 0h26v20H2z" fill="#127fc9" /><path d="M0 19h30v2H0z" fill="#0f5f9c" /><path d="M6 3h13v25H6z" fill="#24a6e8" /><path d="M6 3h13v9H6z" fill="#37d2f5" /><path d="M6 20h13v8H6z" fill="#1785cf" /><path d="M11 5h4" stroke="#0b4f80" /></svg>
          </TaskIcon>
        </div>
        <div className="relative ml-[15px] flex h-[50px] w-[49px] justify-center rounded-md border border-white/5 bg-white/8">
          <TaskIcon dot="w-5 bg-[#0a8bf5]"><Chrome /></TaskIcon>
          <span className="absolute top-[3px] left-[25px] flex h-[20px] w-[20px] items-center justify-center rounded-full bg-[#a642b8] text-[11px] text-white">A</span>
        </div>
        <div className="ml-[15px]">
          <TaskIcon dot="w-2 bg-[#a79b98]">
            <svg viewBox="0 0 30 28" className="h-7 w-[30px]"><path d="M7 0h22q1 0 1 1v6H7z" fill="#41a5ee" /><path d="M7 7h23v7H7z" fill="#2b7cd3" /><path d="M7 14h23v7H7z" fill="#185abd" /><path d="M7 21h23v6q0 1-1 1H7z" fill="#103f91" /><rect y="6" width="16" height="16" rx="1" fill="#185abd" /><text x="8" y="18.500" textAnchor="middle" fontSize="12" fontWeight="700" fill="#fff" fontFamily="Open Sans">W</text></svg>
          </TaskIcon>
        </div>
      </div>
      <div className="ml-auto flex items-center pr-[25px] text-[14.500px] leading-5">
        <svg viewBox="0 0 14 8" className="h-2 w-3.5" fill="none" stroke="#fff" strokeWidth="1.700"><path d="M.7 7.300L7 1l6.300 6.300" /></svg>
        <div className="-mt-px ml-[24px] w-[34px] text-center tracking-[-0.4px]">ENG<br />IN</div>
        <svg viewBox="0 0 20 16" className="ml-[20px] h-4 w-5" fill="none" stroke="#fff" strokeWidth="1.600">
          <path d="M.8 5.800a13 13 0 0 1 18.400 0M3.800 9a8.800 8.800 0 0 1 12.400 0M6.800 12a4.500 4.500 0 0 1 6.400 0" /><circle cx="10" cy="14.300" r="1.500" fill="#fff" stroke="none" />
        </svg>
        <svg viewBox="0 0 20 18" className="ml-[10px] h-[18px] w-5" fill="none" stroke="#fff" strokeWidth="1.400">
          <path d="M.8 6.500h3L8.500 2v14l-4.700-4.500h-3zM11 6q2 3 0 6M13.500 3.500q4 5.500 0 11M16 1.200q6 7.800 0 15.600" />
        </svg>
        <svg viewBox="0 0 20 18" className="ml-[10px] h-[18px] w-5">
          <rect x="1" y="5" width="16" height="11" rx="2.500" fill="none" stroke="#fff" strokeWidth="1.600" /><path d="M17.500 8.500h2v4h-2z" fill="#fff" />
          <path d="M3 7.500h6L8 14H3z" fill="#fff" /><path d="M4.500 0L0 8h3l-1 5 5.500-7.500H4.500z" fill="#fff" stroke="#142b2f" strokeWidth=".6" />
        </svg>
        <div className="-mt-[2px] ml-[16px] flex w-[74px] flex-col items-end tracking-[0.100px] whitespace-nowrap"><span>10:37 PM</span><span>6/25/2024</span></div>
        <svg viewBox="0 0 16 19" className="ml-[11px] h-[19px] w-4" fill="#2ba0f7"><path d="M8 0a6 6 0 0 1 6 6.500V12l2 3.500H0L2 12V6.500A6 6 0 0 1 8 0zM5 16.500h6a3 2.500 0 0 1-6 0z" /></svg>
        <div className="relative ml-[23px] h-[30px] w-[29px]">
          <svg viewBox="0 0 29 29" className="h-[29px] w-[29px]">
            <defs>
              <linearGradient id="cpa" x1="0" y1="0" x2="0" y2="1"><stop offset="0" stopColor="#1b8ff0" /><stop offset=".5" stopColor="#35b97c" /><stop offset="1" stopColor="#f0cb2c" /></linearGradient>
              <linearGradient id="cpb" x1="0" y1="0" x2="0" y2="1"><stop offset="0" stopColor="#9b4fe0" /><stop offset="1" stopColor="#f2708a" /></linearGradient>
            </defs>
            <path d="M8 0h9l-6 19H3Q-1 19 .5 14L4 4q1-4 4-4z" fill="url(#cpa)" /><path d="M13 0h4q3 0 4 4l1 4h-6z" fill="#1f4fd8" /><path d="M19 8h7q4 0 2.500 5l-3 10q-1 4-5 4h-8z" fill="url(#cpb)" />
          </svg>
          <span className="absolute bottom-0 left-[6px] flex h-[10px] w-[24px] items-center justify-center rounded-sm bg-[#ffc400] text-[8px] leading-none font-extrabold tracking-[0.5px] text-[#1b1b1b]">PRE</span>
        </div>
      </div>
    </footer>
  );
}

export default function App() {
  return (
    <div className="flex h-[1080px] w-[1920px] flex-col overflow-hidden font-['Open_Sans','Noto_Sans',sans-serif]">
      <TabStrip />
      <Toolbar />
      <NavBar />
      <Banner />
      <div className="font-['Liberation_Sans',Arial,sans-serif]">
        <h1 className="h-[55px] border-b border-[#8b8580] bg-[#f0efed] pl-[10px] text-[24.700px] leading-[54px] font-bold text-[#161513]">Schedule &amp; Grades</h1>
        <div className="flex h-[794px]">
          <SideMenu />
          <Content />
        </div>
      </div>
      <Taskbar />
    </div>
  );
}
